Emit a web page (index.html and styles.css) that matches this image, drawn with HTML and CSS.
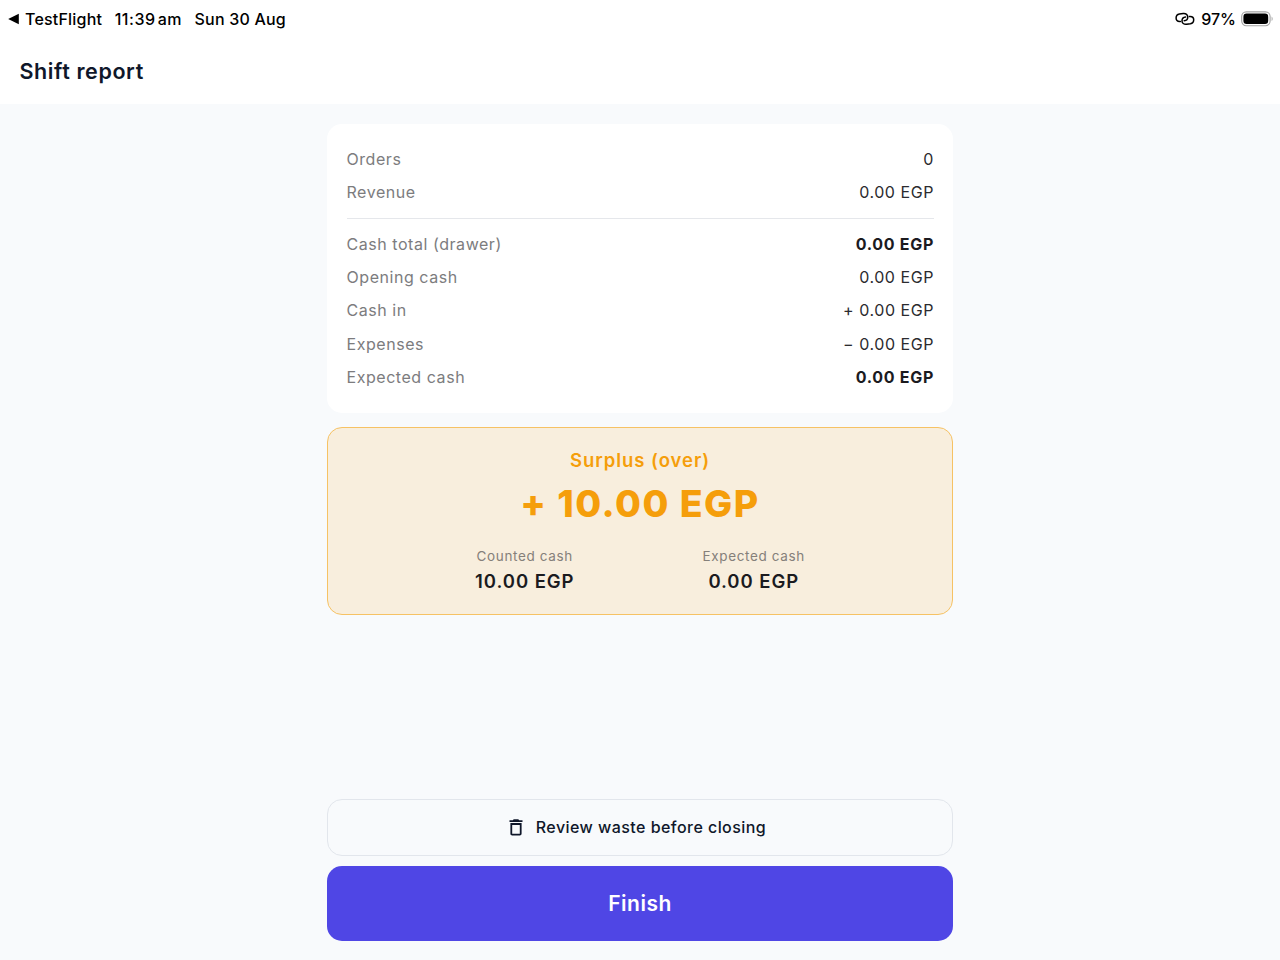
FILE: index.html
```html
<!DOCTYPE html>
<html lang="en">
    <head>
        <meta charset="utf-8">
        <title>Shift report</title>
        <link rel="stylesheet" href="styles.css">
    </head>
    <body>
        <!-- Status bar -->
        <div class="status-bar">
            <svg class="back-arrow" width="12" height="12" viewBox="0 0 12 12"><path d="M0.2 6 L10.8 0.8 V11.2 Z" fill="#000"/></svg>
            <span class="status-app">TestFlight</span>
            <span class="status-time">11:39<span class="status-ampm">am</span></span>
            <span class="status-date">Sun 30 Aug</span>
            <div class="status-right">
                <svg class="link-icon" width="20" height="14" viewBox="0 0 20 14" fill="none" stroke="#000" stroke-width="1.5" stroke-linecap="round">
                    <path d="M5.4 9.4 H4.6 C2.4 9.4 1.1 7.9 1.1 6 C1.1 4 2.4 2.4 4.4 2 L8.2 1.5 C11 1.2 12.8 2.8 12.8 4.9 C12.8 7 11.4 8.5 9.2 8.7"/>
                    <path d="M14.4 4.4 H15.2 C17.4 4.4 18.7 5.9 18.7 7.8 C18.7 9.8 17.4 11.4 15.4 11.8 L11.6 12.3 C8.8 12.6 7 11 7 8.9 C7 6.8 8.4 5.3 10.6 5.1"/>
                </svg>
                <span class="status-percent">97%</span>
                <svg class="battery" width="32" height="16" viewBox="0 0 32 16">
                    <rect x="0.7" y="0.9" width="28.4" height="13.8" rx="4.6" fill="none" stroke="#a3a3a3" stroke-width="1.1"/>
                    <rect x="2.4" y="2.6" width="24.8" height="10.4" rx="3.2" fill="#000"/>
                    <path d="M30.6 5.5 C32 6.2 32 9.4 30.6 10.1 Z" fill="#a3a3a3"/>
                </svg>
            </div>
        </div>

        <h1 class="title">Shift report</h1>

        <div class="content">
            <!-- Totals -->
            <div class="card">
                <div class="row"><span class="label">Orders</span><span class="value">0</span></div>
                <div class="row"><span class="label">Revenue</span><span class="value">0.00 EGP</span></div>
                <div class="divider"></div>
                <div class="row"><span class="label">Cash total (drawer)</span><span class="value bold">0.00 EGP</span></div>
                <div class="row"><span class="label">Opening cash</span><span class="value">0.00 EGP</span></div>
                <div class="row"><span class="label">Cash in</span><span class="value">+ 0.00 EGP</span></div>
                <div class="row"><span class="label">Expenses</span><span class="value">− 0.00 EGP</span></div>
                <div class="row"><span class="label">Expected cash</span><span class="value bold">0.00 EGP</span></div>
            </div>

            <!-- Difference -->
            <div class="surplus">
                <div class="surplus-title">Surplus (over)</div>
                <div class="surplus-amount">+ 10.00 EGP</div>
                <div class="surplus-details">
                    <div class="detail">
                        <div class="detail-label">Counted cash</div>
                        <div class="detail-value">10.00 EGP</div>
                    </div>
                    <div class="detail">
                        <div class="detail-label">Expected cash</div>
                        <div class="detail-value">0.00 EGP</div>
                    </div>
                </div>
            </div>

            <!-- Actions -->
            <div class="actions">
                <button class="btn btn-outline">
                    <svg class="trash" width="14" height="17" viewBox="0 0 14 17">
                        <path d="M0.5 1.3 H3.8 L4.7 0.3 H9.3 L10.2 1.3 H13.5 V3.1 H0.5 Z" fill="#0f172a"/>
                        <path d="M2.3 5 H11.7 V14.8 Q11.7 15.7 10.8 15.7 H3.2 Q2.3 15.7 2.3 14.8 Z" fill="none" stroke="#0f172a" stroke-width="1.8"/>
                    </svg>
                    <span>Review waste before closing</span>
                </button>
                <button class="btn btn-primary">Finish</button>
            </div>
        </div>
    </body>
</html>
```

FILE: styles.css
```css
* { box-sizing: border-box; }
body {
    margin: 0;
    height: 960px;
    display: flex;
    flex-direction: column;
    font-family: Inter, "Liberation Sans", sans-serif;
    background-color: #fff;
    color: #1b1b1f;
}

/* Status bar */
.status-bar {
    display: flex;
    align-items: center;
    height: 38px;
    padding: 0 7px 0 8px;
    font-size: 16px;
    font-weight: 500;
    letter-spacing: 0.2px;
    color: #000;
    white-space: nowrap;
}
.status-app { margin-left: 5px; }
.status-time { margin-left: 12.5px; letter-spacing: 0.55px; }
.status-ampm { margin-left: 2px; }
.status-date { margin-left: 12.5px; letter-spacing: 0.2px; }
.status-right { display: flex; align-items: center; margin-left: auto; }
.status-percent { margin: 0 5px 0 6px; letter-spacing: 0; }

.title {
    margin: 0;
    height: 66px;
    padding-left: 19.5px;
    font-size: 21.5px;
    font-weight: 600;
    line-height: 66px;
    letter-spacing: 0.6px;
    color: #0f172a;
}

.content {
    flex: 1;
    display: flex;
    flex-direction: column;
    align-items: center;
    padding: 19.5px 0;
    background-color: #f8fafc;
}

/* Totals card */
.card {
    width: 626px;
    height: 289px;
    padding: 19px 19px 19px 19.5px;
    background-color: #fff;
    border-radius: 15px;
}
.row {
    display: flex;
    justify-content: space-between;
    height: 33.3px;
    line-height: 33.3px;
    font-size: 16px;
    letter-spacing: 0.55px;
}
.label { color: #7c7c7e; }
.value { color: #2b2b2f; }
.bold { font-weight: 700; letter-spacing: 0.7px; color: #1b1b1f; }
.divider { height: 1px; margin: 8.6px 0 9.2px; background-color: #e5e7eb; }

/* Surplus card */
.surplus {
    width: 626px;
    height: 188px;
    margin-top: 14.4px;
    padding-top: 19px;
    text-align: center;
    background-color: #f8eedd;
    border: 1px solid #f6c264;
    border-radius: 15px;
}
.surplus-title {
    font-size: 18.5px;
    font-weight: 600;
    line-height: 26px;
    letter-spacing: 0.95px;
    color: #f59e0b;
}
.surplus-amount {
    font-size: 37.5px;
    font-weight: 800;
    line-height: 46px;
    margin-top: 8px;
    letter-spacing: 1.5px;
    color: #f59e0b;
}
.surplus-details { display: flex; justify-content: space-around; margin: 18px 83px 0; }
.detail-label { font-size: 13.5px; line-height: 22px; letter-spacing: 0.65px; color: #85807a; }
.detail-value { font-size: 18.5px; font-weight: 600; line-height: 29px; letter-spacing: 0.95px; }

/* Bottom buttons */
.actions { display: flex; flex-direction: column; gap: 10px; width: 626px; margin-top: auto; }
.btn {
    display: flex;
    align-items: center;
    justify-content: center;
    font-family: inherit;
    border-radius: 15px;
    padding: 0;
}
.btn-outline {
    gap: 13px;
    height: 57px;
    padding-right: 5px;
    background-color: #f8fafc;
    border: 1px solid #e2e6ec;
    font-size: 16px;
    font-weight: 500;
    letter-spacing: 0.45px;
    color: #0f172a;
}
.btn-primary {
    height: 75px;
    background-color: #4f46e5;
    border: none;
    font-size: 21px;
    font-weight: 600;
    letter-spacing: 0.5px;
    color: #fff;
}
```
